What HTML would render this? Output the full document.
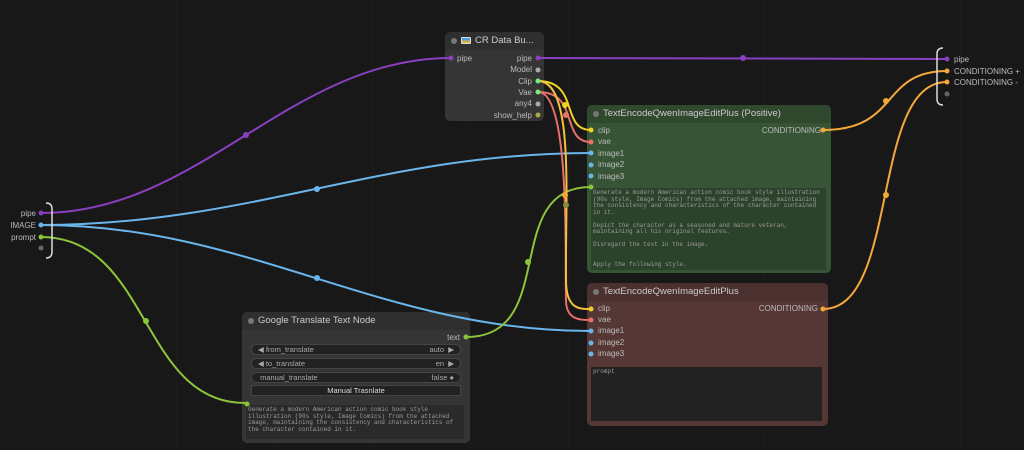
<!DOCTYPE html>
<html><head><meta charset="utf-8"><style>
*{box-sizing:border-box;margin:0;padding:0}
body{width:1024px;height:450px;overflow:hidden;background:#181818;font-family:"Liberation Sans",sans-serif;position:relative;color:#bbb;font-size:8px}
.bg{position:absolute;inset:0;background-image:linear-gradient(90deg,#1c1c1c 1px,transparent 1px);background-size:98px 100%;background-position:-20px 0}
.node{position:absolute;border-radius:5px;overflow:hidden}
.title{height:18px;line-height:18px;padding-left:16px;font-size:9.5px;color:#ccc;position:relative}
.title:before{content:"";position:absolute;left:6px;top:6px;width:6px;height:6px;border-radius:50%;background:#777}
.lbl{position:absolute;font-size:8px;color:#bbb;white-space:nowrap}
.ta{position:absolute;font-family:"Liberation Mono",monospace;font-size:6px;line-height:6.5px;color:#999;padding:2px;overflow:hidden}
.w{position:absolute;left:9px;width:210px;height:11px;border-radius:6px;background:#222;border:1px solid #444;font-size:7.5px;line-height:9px;color:#aaa;padding:0 6px}
svg{position:absolute;left:0;top:0}
.ico{display:inline-block;width:10px;height:7px;vertical-align:-1px;margin-right:4px;background:linear-gradient(#4a9ee0 50%,#e0b040 50%);border:1px solid #ddd;border-radius:1px}
</style></head><body>
<div class="bg"></div>

<div class="node" style="left:445px;top:32px;width:99px;height:89px;background:#353535">
<div class="title" style="background:#2f2f2f"><span class="ico"></span>CR Data Bu...</div>
<div class="lbl" style="left:12px;top:22px">pipe</div>
<div class="lbl" style="right:12px;top:22px">pipe</div>
<div class="lbl" style="right:12px;top:33px">Model</div>
<div class="lbl" style="right:12px;top:45px">Clip</div>
<div class="lbl" style="right:12px;top:56px">Vae</div>
<div class="lbl" style="right:12px;top:67px">any4</div>
<div class="lbl" style="right:12px;top:79px">show_help</div>
</div>

<div class="node" style="left:587px;top:105px;width:244px;height:168px;background:#375536">
<div class="title" style="background:#2f482e">TextEncodeQwenImageEditPlus (Positive)</div>
<div class="lbl" style="left:11px;top:21px">clip</div>
<div class="lbl" style="left:11px;top:32px">vae</div>
<div class="lbl" style="left:11px;top:44px">image1</div>
<div class="lbl" style="left:11px;top:55px">image2</div>
<div class="lbl" style="left:11px;top:67px">image3</div>
<div class="lbl" style="right:10px;top:21px">CONDITIONING</div>
<div class="ta" style="left:4px;top:83px;width:235px;height:82px;background:#2c432b">Generate a modern American action comic book style illustration (90s style, Image Comics) from the attached image, maintaining the consistency and characteristics of the character contained in it.<br><br>Depict the character as a seasoned and mature veteran, maintaining all his original features.<br><br>Disregard the text in the image.<br><br><br>Apply the following style.</div>
</div>

<div class="node" style="left:587px;top:283px;width:241px;height:143px;background:#553835">
<div class="title" style="background:#4a302e">TextEncodeQwenImageEditPlus</div>
<div class="lbl" style="left:11px;top:21px">clip</div>
<div class="lbl" style="left:11px;top:32px">vae</div>
<div class="lbl" style="left:11px;top:43px">image1</div>
<div class="lbl" style="left:11px;top:55px">image2</div>
<div class="lbl" style="left:11px;top:66px">image3</div>
<div class="lbl" style="right:10px;top:21px">CONDITIONING</div>
<div class="ta" style="left:4px;top:84px;width:231px;height:54px;background:#222">prompt</div>
</div>

<div class="node" style="left:242px;top:312px;width:228px;height:131px;background:#353535">
<div class="title" style="background:#2f2f2f">Google Translate Text Node</div>
<div class="lbl" style="right:10px;top:21px">text</div>
<div class="w" style="top:32px">◀ from_translate<span style="float:right">auto &nbsp;▶</span></div>
<div class="w" style="top:46px">◀ to_translate<span style="float:right">en &nbsp;▶</span></div>
<div class="w" style="top:60px">&nbsp;manual_translate<span style="float:right">false ●</span></div>
<div class="w" style="top:73px;border-radius:1px;text-align:center;color:#ddd">Manual Trasnlate</div>
<div class="ta" style="left:4px;top:93px;width:218px;height:34px;background:#2a2a2a">Generate a modern American action comic book style illustration (90s style, Image Comics) from the attached image, maintaining the consistency and characteristics of the character contained in it.</div>
</div>

<div class="lbl" style="right:988px;top:209px">pipe</div>
<div class="lbl" style="right:988px;top:221px">IMAGE</div>
<div class="lbl" style="right:988px;top:233px">prompt</div>
<div class="lbl" style="left:954px;top:55px">pipe</div>
<div class="lbl" style="left:954px;top:67px">CONDITIONING +</div>
<div class="lbl" style="left:954px;top:78px">CONDITIONING -</div>

<svg width="1024" height="450" fill="none">
<g stroke-width="2">
<path d="M41 213 C200 213 290 58 451 58" stroke="#8a3fc0"/>
<path d="M538 58 L947 59" stroke="#8a3fc0"/>
<path d="M41 225 C250 225 380 153 591 153" stroke="#6ab6ec"/>
<path d="M41 225 C250 225 380 331 591 331" stroke="#6ab6ec"/>
<path d="M41 237 C150 237 140 403 245 403" stroke="#8cc43a"/>
<path d="M466 337 C560 337 500 187 591 187" stroke="#8cc43a"/>
<path d="M538 92 C580 92 560 142 591 142" stroke="#e8706a"/>
<path d="M538 92 C570 92 565 250 566 300 C566 320 580 320 591 320" stroke="#e8706a"/>
<path d="M538 81 C580 81 560 130 591 130" stroke="#f0d020"/>
<path d="M538 81 C575 81 565 200 566 280 C566 310 580 309 591 309" stroke="#f5c040"/>
<path d="M823 130 C900 130 880 71 947 71" stroke="#f5a83a"/>
<path d="M823 309 C900 309 870 82 947 82" stroke="#f5a83a"/>
<path d="M46 203 Q52 203 52 209 L52 252 Q52 258 46 258" stroke="#ddd" stroke-width="1.5"/>
<path d="M943 48 Q937 48 937 54 L937 99 Q937 105 943 105" stroke="#ddd" stroke-width="1.5"/>
</g>
<g>
<circle cx="246" cy="135" r="3" fill="#8a3fc0"/><circle cx="743" cy="58" r="3" fill="#8a3fc0"/>
<circle cx="317" cy="189" r="3" fill="#6ab6ec"/><circle cx="317" cy="278" r="3" fill="#6ab6ec"/>
<circle cx="146" cy="321" r="3" fill="#8cc43a"/><circle cx="528" cy="262" r="3" fill="#8cc43a"/>
<circle cx="565" cy="105" r="3" fill="#f0d020"/><circle cx="565" cy="195" r="3" fill="#f5a83a"/>
<circle cx="566" cy="115" r="3" fill="#e8706a"/><circle cx="566" cy="205" r="3" fill="#8a8a3a"/>
<circle cx="886" cy="101" r="3" fill="#f5a83a"/><circle cx="886" cy="195" r="3" fill="#f5a83a"/>
<circle cx="41" cy="213" r="2.5" fill="#8a3fc0"/><circle cx="41" cy="225" r="2.5" fill="#6ab6ec"/>
<circle cx="41" cy="237" r="2.5" fill="#8cc43a"/><circle cx="41" cy="248" r="2.5" fill="#666"/>
<circle cx="947" cy="59" r="2.5" fill="#8a3fc0"/><circle cx="947" cy="71" r="2.5" fill="#f5a83a"/>
<circle cx="947" cy="82" r="2.5" fill="#f5a83a"/><circle cx="947" cy="94" r="2.5" fill="#666"/>
<circle cx="451" cy="58" r="2.5" fill="#8a3fc0"/><circle cx="538" cy="58" r="2.5" fill="#8a3fc0"/>
<circle cx="538" cy="70" r="2.5" fill="#aaa"/><circle cx="538" cy="81" r="2.5" fill="#7e7"/>
<circle cx="538" cy="92" r="2.5" fill="#7e7"/><circle cx="538" cy="104" r="2.5" fill="#aaa"/>
<circle cx="538" cy="115" r="2.5" fill="#aa4"/>
<circle cx="591" cy="130" r="2.5" fill="#f0d020"/><circle cx="591" cy="142" r="2.5" fill="#e8706a"/>
<circle cx="591" cy="153" r="2.5" fill="#6ab6ec"/><circle cx="591" cy="165" r="2.5" fill="#6ab6ec"/>
<circle cx="591" cy="176" r="2.5" fill="#6ab6ec"/><circle cx="591" cy="187" r="2.5" fill="#8cc43a"/>
<circle cx="823" cy="130" r="2.5" fill="#f5a83a"/>
<circle cx="591" cy="309" r="2.5" fill="#f0d020"/><circle cx="591" cy="320" r="2.5" fill="#e8706a"/>
<circle cx="591" cy="331" r="2.5" fill="#6ab6ec"/><circle cx="591" cy="343" r="2.5" fill="#6ab6ec"/>
<circle cx="591" cy="354" r="2.5" fill="#6ab6ec"/><circle cx="823" cy="309" r="2.5" fill="#f5a83a"/>
<circle cx="466" cy="337" r="2.5" fill="#8cc43a"/><circle cx="247" cy="404" r="2.5" fill="#8cc43a"/>
</g>
</svg>
</body></html>
